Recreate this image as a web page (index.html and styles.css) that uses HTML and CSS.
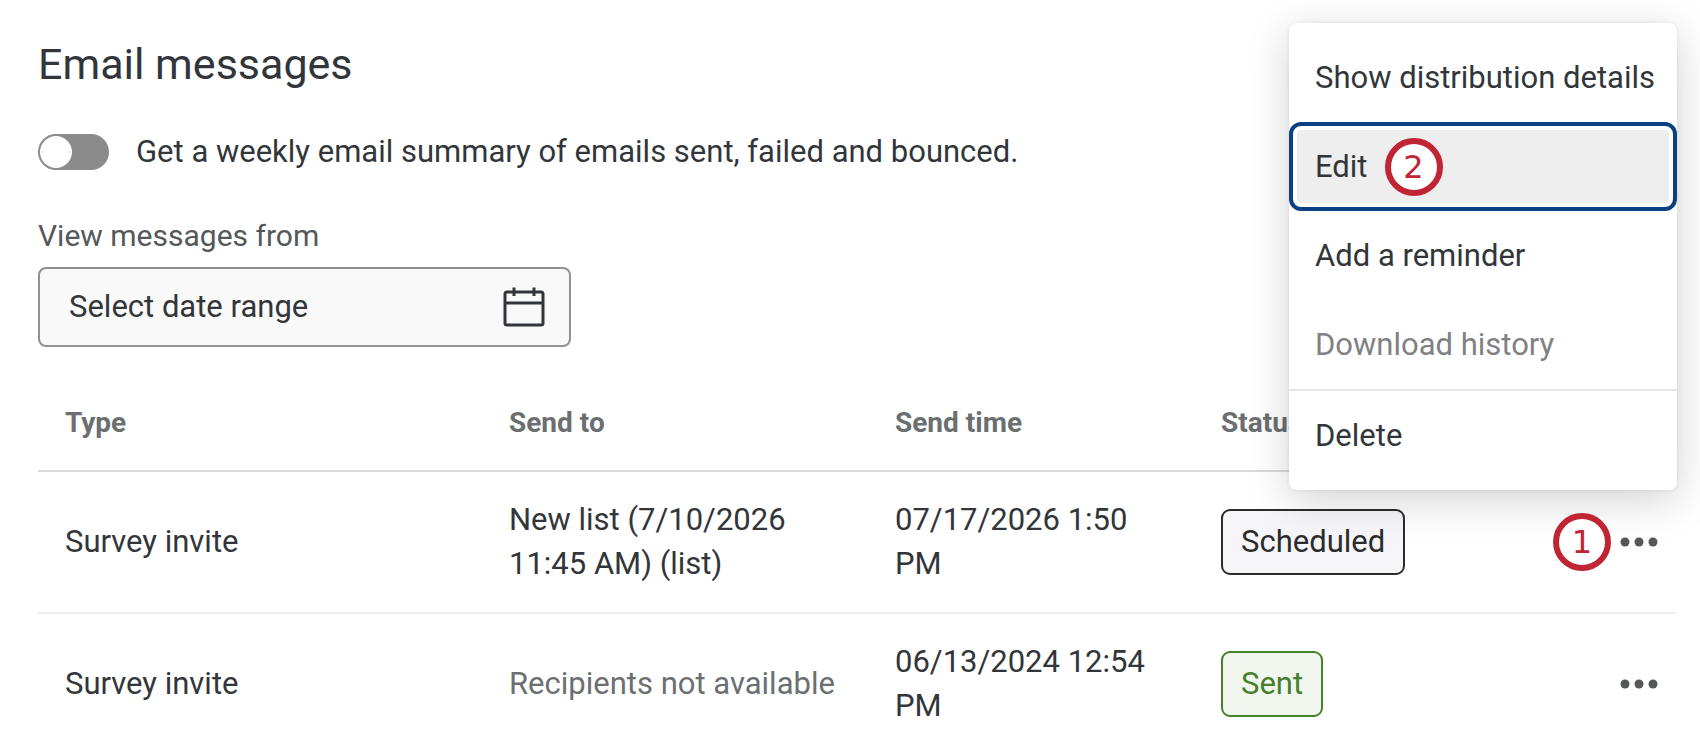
FILE: index.html
```
<!DOCTYPE html>
<html lang="en">
<head>
    <meta charset="UTF-8">
    <meta name="viewport" content="width=device-width, initial-scale=1.0">
    <title>Email messages</title>
    <link rel="stylesheet" href="styles.css">
</head>
<body>
    <main class="page">
        <h1>Email messages</h1>

        <div class="summary-toggle">
            <input type="checkbox" role="switch" class="switch" id="weeklySummary">
            <label for="weeklySummary">Get a weekly email summary of emails sent, failed and bounced.</label>
        </div>

        <div class="date-filter">
            <label class="field-label" for="dateRange">View messages from</label>
            <button type="button" class="date-button" id="dateRange">
                <span>Select date range</span>
                <svg class="calendar-icon" viewBox="0 0 42 40" fill="none" stroke="#32363a" stroke-width="3" aria-hidden="true">
                    <rect x="2" y="5" width="38" height="33" rx="2"/>
                    <path d="M2 16H40M11 0.500V9M31 0.500V9"/>
                </svg>
            </button>
        </div>

        <table class="messages">
            <thead>
                <tr>
                    <th class="col-type">Type</th>
                    <th class="col-to">Send to</th>
                    <th class="col-time">Send time</th>
                    <th class="col-status">Status</th>
                    <th class="col-actions" aria-label="Actions"></th>
                </tr>
            </thead>
            <tbody>
                <tr>
                    <td>Survey invite</td>
                    <td>New list (7/10/2026 11:45 AM) (list)</td>
                    <td>07/17/2026 1:50 PM</td>
                    <td><span class="status scheduled">Scheduled</span></td>
                    <td>
                        <div class="actions">
                            <span class="step">1</span>
                            <button type="button" class="more-btn" aria-label="More options" aria-expanded="true">
                                <svg viewBox="0 0 38 10" fill="#555759" aria-hidden="true"><circle cx="5" cy="5" r="4.500"/><circle cx="19" cy="5" r="4.500"/><circle cx="33" cy="5" r="4.500"/></svg>
                            </button>
                        </div>
                    </td>
                </tr>
                <tr>
                    <td>Survey invite</td>
                    <td class="muted">Recipients not available</td>
                    <td>06/13/2024 12:54 PM</td>
                    <td><span class="status sent">Sent</span></td>
                    <td>
                        <div class="actions">
                            <button type="button" class="more-btn" aria-label="More options">
                                <svg viewBox="0 0 38 10" fill="#555759" aria-hidden="true"><circle cx="5" cy="5" r="4.500"/><circle cx="19" cy="5" r="4.500"/><circle cx="33" cy="5" r="4.500"/></svg>
                            </button>
                        </div>
                    </td>
                </tr>
            </tbody>
        </table>

        <div class="menu" role="menu">
            <button type="button" class="menu-item" role="menuitem">Show distribution details</button>
            <button type="button" class="menu-item focused" role="menuitem">Edit <span class="step">2</span></button>
            <button type="button" class="menu-item" role="menuitem">Add a reminder</button>
            <button type="button" class="menu-item" role="menuitem" disabled>Download history</button>
            <hr class="menu-divider">
            <button type="button" class="menu-item" role="menuitem">Delete</button>
        </div>
    </main>
</body>
</html>
```
FILE: styles.css
```
* {
    box-sizing: border-box;
}

body {
    margin: 0;
    background: #fff;
    color: #32363a;
    font-family: Roboto, "Liberation Sans", sans-serif;
    font-size: 31px;
    line-height: 44px;
}

button {
    font: inherit;
    color: inherit;
    cursor: pointer;
}

.page {
    position: relative;
    height: 100vh;
    padding: 36px 24px 0 38px;
    overflow: hidden;
}

h1 {
    margin: 0 0 38px;
    font-size: 43px;
    font-weight: 400;
    line-height: 56px;
}

.summary-toggle {
    display: flex;
    align-items: center;
    gap: 27px;
    margin-bottom: 40px;
}

.switch {
    appearance: none;
    display: flex;
    width: 71px;
    height: 36px;
    margin: 0;
    padding: 2px;
    border-radius: 18px;
    background: #8b8b8b;
    cursor: pointer;
}

.switch::before {
    content: "";
    width: 32px;
    height: 32px;
    border-radius: 50%;
    background: #fff;
}

.switch:checked {
    justify-content: flex-end;
    background: #0b4085;
}

.date-filter {
    display: flex;
    flex-direction: column;
    align-items: flex-start;
    gap: 9px;
    margin-bottom: 27px;
}

.field-label {
    color: #55585b;
    font-size: 30px;
}

.date-button {
    display: flex;
    align-items: center;
    justify-content: space-between;
    width: 533px;
    max-width: 100%;
    height: 80px;
    padding: 0 24px 0 29px;
    border: 2px solid #8f9192;
    border-radius: 8px;
    background: #f9f9f9;
}

.calendar-icon {
    width: 42px;
    height: 40px;
}

.messages {
    width: 100%;
    table-layout: fixed;
    border-collapse: separate;
    border-spacing: 0;
}

.messages th {
    padding: 27px 27px 25px;
    border-bottom: 2px solid #d9dada;
    color: #6c6f71;
    font-size: 28px;
    font-weight: 700;
    text-align: left;
}

.messages td {
    padding: 26px 27px;
    border-bottom: 2px solid #eee;
}

.messages .muted {
    color: #6c6f71;
}

.messages .col-type {
    width: 444px;
}

.messages .col-to {
    width: 386px;
}

.messages .col-time {
    width: 326px;
}

.messages td:last-child {
    padding-right: 18px;
}

.status {
    display: inline-block;
    padding: 9px 18px;
    border: 2px solid;
    border-radius: 9px;
}

.scheduled {
    background: #f6f6f9;
    color: #2c2c2c;
}

.sent {
    background: #f1f7ef;
    color: #46802a;
}

.actions {
    display: flex;
    align-items: center;
    justify-content: flex-end;
    gap: 9px;
}

.more-btn {
    display: flex;
    padding: 0;
    border: none;
    background: none;
}

.more-btn svg {
    width: 38px;
    height: 10px;
}

/* numbered step marker, stays above the menu shadow */
.step {
    position: relative;
    z-index: 2;
    display: flex;
    align-items: center;
    justify-content: center;
    width: 58px;
    height: 58px;
    border: 6px solid #c12432;
    border-radius: 50%;
    background: #fff;
    color: #c12432;
    font-family: "DejaVu Sans", sans-serif;
    font-size: 32px;
}

.menu {
    position: absolute;
    top: 23px;
    right: 23px;
    z-index: 1;
    width: 388px;
    padding: 10px 0;
    border-radius: 8px;
    background: #fff;
    box-shadow: 0 0 4px rgba(0, 0, 0, 0.08), 0 10px 44px rgba(0, 0, 0, 0.18);
}

.menu-item {
    display: flex;
    align-items: center;
    gap: 17px;
    width: 100%;
    height: 89px;
    padding: 0 26px;
    border: none;
    background: transparent;
    white-space: nowrap;
}

.menu-item.focused {
    padding: 0 22px;
    border: 4px solid #0b4085;
    border-radius: 12px;
    background: #eee;
    box-shadow: inset 0 0 0 4px #fff;
}

.menu-item:disabled {
    color: #7f8182;
    cursor: default;
}

.menu-divider {
    height: 2px;
    margin: 0;
    border: none;
    background: #e6e6e6;
}
```
